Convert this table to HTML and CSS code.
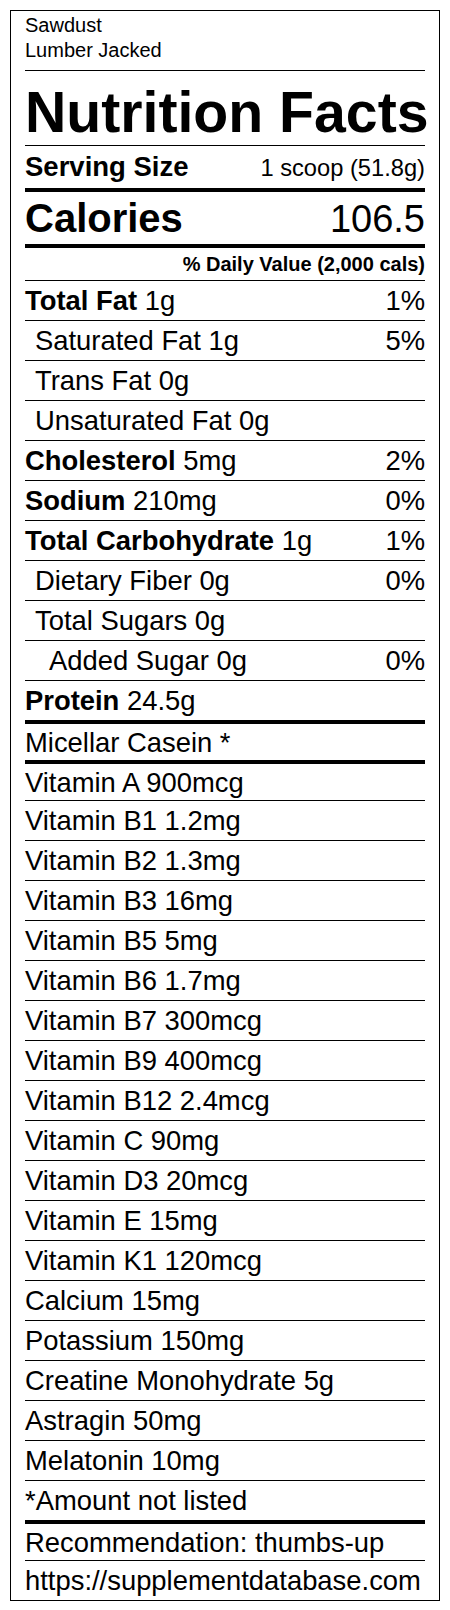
FILE: index.html
```html
<!DOCTYPE html>
<html lang="en">
<head>
<meta charset="utf-8">
<title>Nutrition Facts - Sawdust</title>
<link rel="stylesheet" href="styles.css">
</head>
<body>
<div class="label">
  <div class="brand">
    <div>Sawdust</div>
    <div>Lumber Jacked</div>
  </div>
  <h1 class="title">Nutrition Facts</h1>
  <div class="serving"><b>Serving Size</b><span class="serving-val">1 scoop (51.8g)</span></div>
  <div class="calories"><b>Calories</b><span class="cal-val">106.5</span></div>
  <div class="dv">% Daily Value (2,000 cals)</div>

  <div class="row"><span><b>Total Fat</b> 1g</span><span>1%</span></div>
  <div class="row ind1"><span>Saturated Fat 1g</span><span>5%</span></div>
  <div class="row ind1"><span>Trans Fat 0g</span></div>
  <div class="row ind1"><span>Unsaturated Fat 0g</span></div>
  <div class="row"><span><b>Cholesterol</b> 5mg</span><span>2%</span></div>
  <div class="row"><span><b>Sodium</b> 210mg</span><span>0%</span></div>
  <div class="row"><span><b>Total Carbohydrate</b> 1g</span><span>1%</span></div>
  <div class="row ind1"><span>Dietary Fiber 0g</span><span>0%</span></div>
  <div class="row ind1"><span>Total Sugars 0g</span></div>
  <div class="row ind2"><span>Added Sugar 0g</span><span>0%</span></div>
  <div class="row"><span><b>Protein</b> 24.5g</span></div>
  <div class="row thick"><span>Micellar Casein *</span></div>
  <div class="row thick"><span>Vitamin A 900mcg</span></div>
  <div class="row"><span>Vitamin B1 1.2mg</span></div>
  <div class="row"><span>Vitamin B2 1.3mg</span></div>
  <div class="row"><span>Vitamin B3 16mg</span></div>
  <div class="row"><span>Vitamin B5 5mg</span></div>
  <div class="row"><span>Vitamin B6 1.7mg</span></div>
  <div class="row"><span>Vitamin B7 300mcg</span></div>
  <div class="row"><span>Vitamin B9 400mcg</span></div>
  <div class="row"><span>Vitamin B12 2.4mcg</span></div>
  <div class="row"><span>Vitamin C 90mg</span></div>
  <div class="row"><span>Vitamin D3 20mcg</span></div>
  <div class="row"><span>Vitamin E 15mg</span></div>
  <div class="row"><span>Vitamin K1 120mcg</span></div>
  <div class="row"><span>Calcium 15mg</span></div>
  <div class="row"><span>Potassium 150mg</span></div>
  <div class="row"><span>Creatine Monohydrate 5g</span></div>
  <div class="row"><span>Astragin 50mg</span></div>
  <div class="row"><span>Melatonin 10mg</span></div>
  <div class="row"><span>*Amount not listed</span></div>
  <div class="row thick"><span>Recommendation: thumbs-up</span></div>
  <div class="row"><span>https://supplementdatabase.com</span></div>
</div>
</body>
</html>
```

FILE: styles.css
```css
* { box-sizing: border-box; }

html, body {
  margin: 0;
  padding: 0;
  background: #fff;
}

body {
  padding: 10px 10px 0;
  font-family: "Liberation Sans", Arial, Helvetica, sans-serif;
  color: #000;
}

.label {
  width: 430px;
  border: 1px solid #000;
  padding: 0 14px;
}

.brand {
  font-size: 20px;
  line-height: 25px;
  padding: 2px 0 7px;
  height: 60px;
  border-bottom: 1px solid #000;
}

.title {
  margin: 0;
  font-size: 57.2px;
  font-weight: bold;
  line-height: 66px;
  padding-top: 8px;
  height: 75px;
  border-bottom: 1px solid #000;
  white-space: nowrap;
}

.serving {
  display: flex;
  justify-content: space-between;
  align-items: baseline;
  font-size: 27.5px;
  line-height: 42px;
  height: 46px;
  border-bottom: 4px solid #000;
}

.serving-val {
  font-size: 23.7px;
}

.calories {
  display: flex;
  justify-content: space-between;
  align-items: baseline;
  font-size: 40px;
  line-height: 52px;
  height: 56px;
  border-bottom: 4px solid #000;
}

.cal-val {
  font-size: 38px;
  font-weight: normal;
}

.dv {
  font-size: 20px;
  font-weight: bold;
  line-height: 32px;
  height: 32px;
  text-align: right;
}

.row {
  display: flex;
  justify-content: space-between;
  align-items: center;
  height: 40px;
  border-top: 1px solid #000;
  font-size: 27.4px;
  line-height: 31px;
  white-space: nowrap;
}

.row.thick {
  border-top-width: 4px;
}

.ind1 { padding-left: 10px; }
.ind2 { padding-left: 24px; }
```
